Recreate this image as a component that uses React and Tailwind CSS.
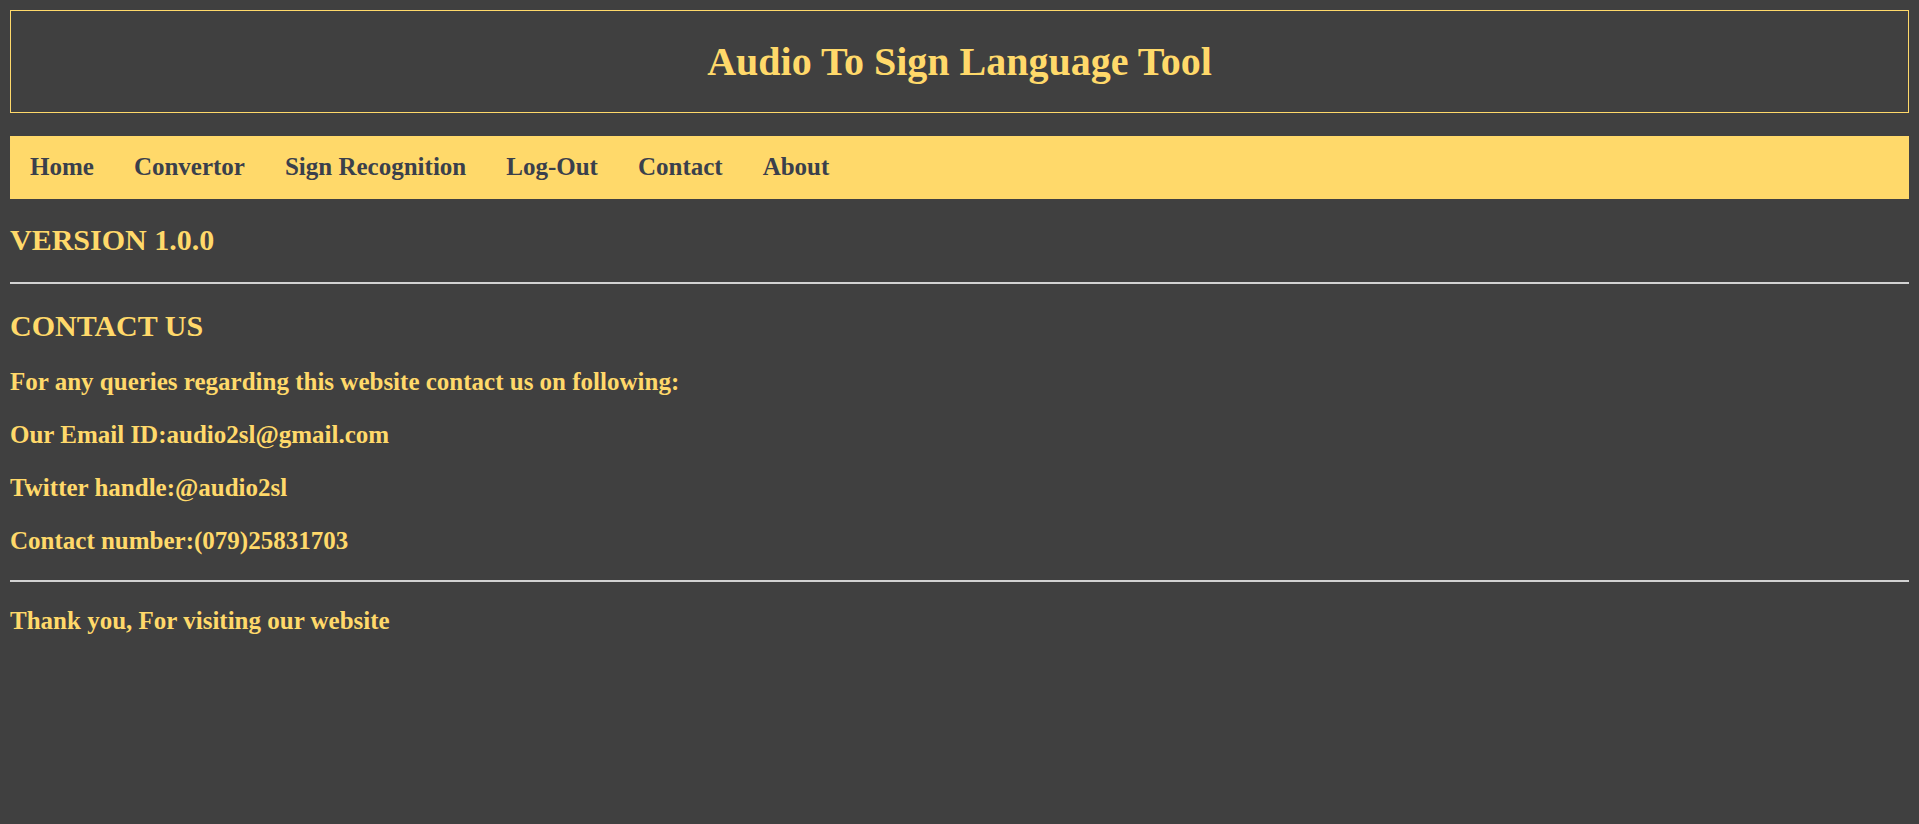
export default function App() {
  const links = ["Home", "Convertor", "Sign Recognition", "Log-Out", "Contact", "About"];
  const lines = [
    "For any queries regarding this website contact us on following:",
    "Our Email ID:audio2sl@gmail.com",
    "Twitter handle:@audio2sl",
    "Contact number:(079)25831703",
  ];
  return (
    <div
      className="min-h-screen bg-[#404040] p-[10px] font-bold text-[#ffd96a]"
      style={{ fontFamily: '"Liberation Serif", "Times New Roman", serif' }}
    >
      <header className="flex h-[103px] items-center justify-center border border-[#ffd96a]">
        <h1 className="text-[40px] leading-none">Audio To Sign Language Tool</h1>
      </header>
      <nav className="mt-[23px] flex h-[63px] items-center bg-[#ffd96a] pb-[3px]">
        {links.map((l) => (
          <a key={l} className="px-[20px] text-[25px] leading-none text-[#3a404c]">
            {l}
          </a>
        ))}
      </nav>
      <h2 className="mt-[26px] text-[30px] leading-none">VERSION 1.0.0</h2>
      <div className="mt-[27px] h-[2px] bg-[#d2d2d2]" />
      <h2 className="mt-[26.6px] text-[30px] leading-none">CONTACT US</h2>
      <div className="mt-[28px] flex flex-col gap-[28px]">
        {lines.map((t) => (
          <h3 key={t} className="text-[25px] leading-none">
            {t}
          </h3>
        ))}
      </div>
      <div className="mt-[27px] h-[2px] bg-[#d2d2d2]" />
      <h3 className="mt-[26px] text-[25px] leading-none">Thank you, For visiting our website</h3>
    </div>
  );
}
